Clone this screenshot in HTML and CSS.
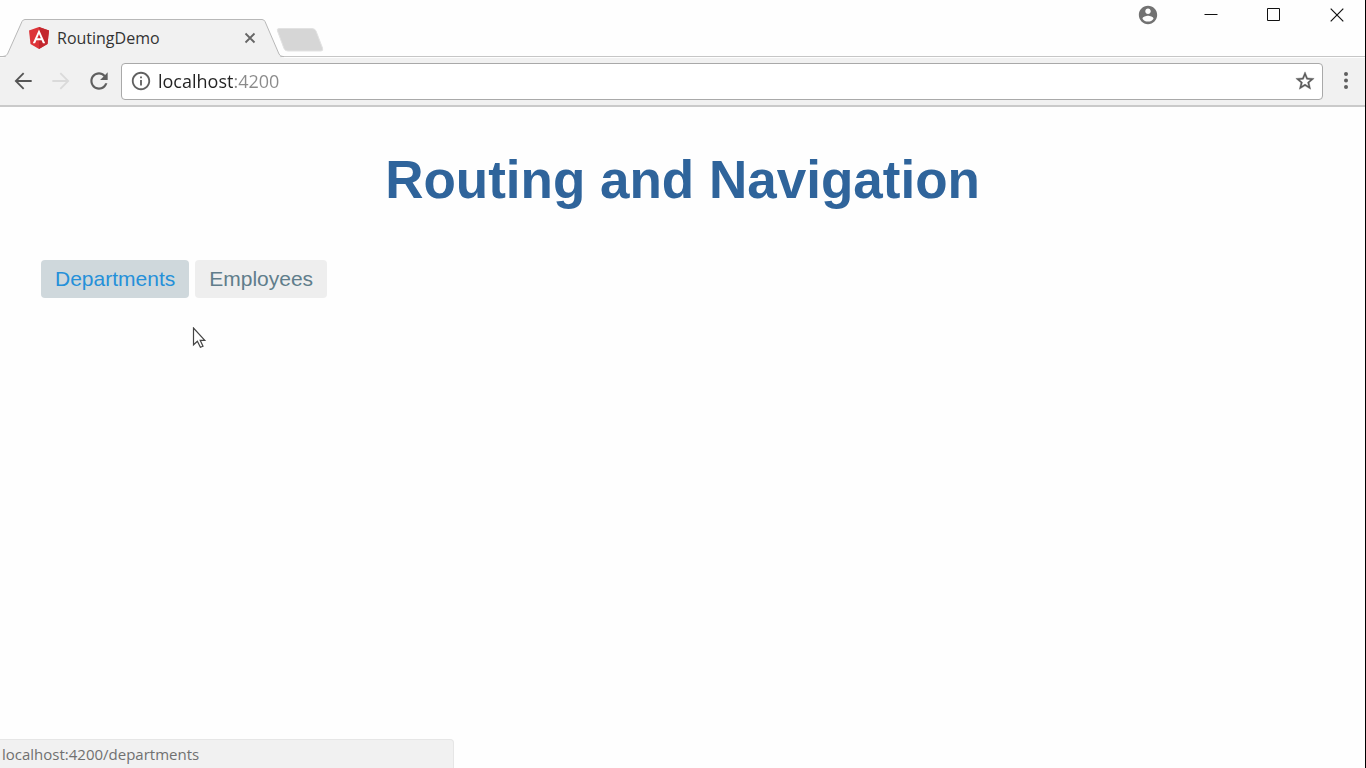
FILE: index.html
```html
<!DOCTYPE html>
<html lang="en">
<head>
<meta charset="utf-8">
<meta name="viewport" content="width=device-width, initial-scale=1">
<title>RoutingDemo</title>
<link rel="stylesheet" href="styles.css">
</head>
<body>
<div class="browser">
  <header class="titlebar">
    <div class="tab">
      <svg class="tab-shape" width="284" height="39" viewBox="0 0 284 39" aria-hidden="true">
        <path d="M0 38.500H3Q6 38.500 7.500 35L22 2.500Q23 .5 25 .5H262Q264 .5 265 2.500L279 35Q280 38.500 283 38.500H284V39H0Z" fill="#f1f1f1"/>
        <path d="M0 37.500H3Q6 37.500 7.500 35L22 2.500Q23 .5 25 .5H262Q264 .5 265 2.500L279 35Q280 37.500 283 37.500H284" fill="none" stroke="#b8b8b8"/>
      </svg>
      <svg class="favicon" width="22" height="22" viewBox="0 0 22 22" aria-hidden="true">
        <path d="M11 0 21 3.500 19.500 17 11 22 2.500 17 1 3.500Z" fill="#dd3338"/>
        <path d="M11 0 21 3.500 19.500 17 11 22Z" fill="#c3272e"/>
        <path d="M11 2.500 4.800 16.300H7.100L8.400 13.200H13.600L14.900 16.300H17.200ZM11 6.900 12.800 11.200H9.200Z" fill="#fff" fill-rule="evenodd"/>
      </svg>
      <span class="tab-title">RoutingDemo</span>
      <button class="tab-close" aria-label="Close tab">
        <svg width="12" height="12" viewBox="0 0 12 12"><path d="M1.500 1.500 10.500 10.500M10.500 1.500 1.500 10.500" stroke="#666" stroke-width="1.800"/></svg>
      </button>
    </div>
    <button class="new-tab" aria-label="New tab">
      <svg width="48" height="24" viewBox="0 0 48 24"><path d="M3 .5H36Q39 .5 40 3L46.500 20Q47.500 23 45 23H12Q9 23 8 20.500L1.500 3Q.5.5 3 .5Z" fill="#d6d6d6" stroke="#e2e2e2"/></svg>
    </button>
    <div class="window-controls">
      <button class="window-button" aria-label="Profile">
        <svg width="22" height="22" viewBox="0 0 24 24"><path fill="#727272" d="M12 2C6.480 2 2 6.480 2 12s4.480 10 10 10 10-4.480 10-10S17.520 2 12 2zm0 3c1.660 0 3 1.340 3 3s-1.340 3-3 3-3-1.340-3-3 1.340-3 3-3zm0 14.200c-2.500 0-4.710-1.280-6-3.220.03-1.990 4-3.080 6-3.080 1.990 0 5.970 1.090 6 3.080-1.290 1.940-3.500 3.220-6 3.220z"/></svg>
      </button>
      <button class="window-button" aria-label="Minimize">
        <svg width="14" height="14" viewBox="0 0 14 14"><path d="M.5 6.500H13.500" stroke="#111"/></svg>
      </button>
      <button class="window-button" aria-label="Maximize">
        <svg width="14" height="14" viewBox="0 0 14 14"><path d="M.5 .5H12.500V12.500H.5Z" fill="none" stroke="#111"/></svg>
      </button>
      <button class="window-button" aria-label="Close window">
        <svg width="14" height="14" viewBox="0 0 14 14"><path d="M.7 .7 13.300 13.300M13.300 .7 .7 13.300" stroke="#111" stroke-width="1.200"/></svg>
      </button>
    </div>
  </header>

  <div class="toolbar">
    <button class="nav-button" aria-label="Back">
      <svg width="26" height="26" viewBox="0 0 24 24"><path fill="#555" d="M20 11.100H7.500l5.700-5.700L12 4.200 4.200 12l7.800 7.800 1.200-1.200-5.700-5.700H20z"/></svg>
    </button>
    <button class="nav-button" aria-label="Forward" disabled>
      <svg width="26" height="26" viewBox="0 0 24 24"><path fill="#dadada" d="M4 11.100h12.500l-5.700-5.700L12 4.200l7.800 7.800-7.800 7.800-1.200-1.200 5.700-5.700H4z"/></svg>
    </button>
    <button class="nav-button" aria-label="Reload">
      <svg width="26" height="26" viewBox="0 0 24 24"><path fill="#5f5f5f" d="M17.650 6.350C16.200 4.900 14.210 4 12 4c-4.420 0-7.990 3.580-7.990 8s3.570 8 7.990 8c3.730 0 6.840-2.550 7.730-6h-2.080c-.82 2.330-3.040 4-5.650 4-3.310 0-6-2.690-6-6s2.690-6 6-6c1.660 0 3.140.69 4.220 1.780L13 11h7V4l-2.350 2.350z"/></svg>
    </button>
    <div class="omnibox">
      <svg width="22" height="22" viewBox="0 0 24 24" aria-hidden="true"><path fill="#616161" d="M11 17h2v-6h-2v6zm1-15C6.480 2 2 6.480 2 12s4.480 10 10 10 10-4.480 10-10S17.520 2 12 2zm0 18c-4.410 0-8-3.590-8-8s3.590-8 8-8 8 3.590 8 8-3.590 8-8 8zM11 9h2V7h-2v2z"/></svg>
      <input class="address" type="text" value="localhost:4200" aria-label="Address" spellcheck="false">
      <button class="bookmark" aria-label="Bookmark this page">
        <svg width="22" height="22" viewBox="0 0 24 24"><path fill="#5a5a5a" stroke="#5a5a5a" stroke-width=".4" d="M22 9.240l-7.190-.62L12 2 9.190 8.630 2 9.240l5.460 4.730L5.820 21 12 17.270 18.180 21l-1.630-7.030L22 9.240zM12 15.400l-3.760 2.270 1-4.280-3.320-2.880 4.380-.38L12 6.100l1.710 4.040 4.380.38-3.320 2.880 1 4.280L12 15.400z"/></svg>
      </button>
    </div>
    <button class="menu" aria-label="Menu">
      <svg width="6" height="20" viewBox="0 0 6 20"><g fill="#5f5f5f"><circle cx="3" cy="3" r="2"/><circle cx="3" cy="9.500" r="2"/><circle cx="3" cy="16" r="2"/></g></svg>
    </button>
  </div>

  <main class="page">
    <h1 class="page-title">Routing and Navigation</h1>
    <nav class="links">
      <a class="link link-active" href="#departments">Departments</a>
      <a class="link" href="#employees">Employees</a>
    </nav>
  </main>

  <svg class="cursor" width="15" height="23" viewBox="0 0 15 23" aria-hidden="true"><path d="M1.500 1V17.800L5.400 14.200 8.400 20.300 11 19.200 8.200 13.300H12.800Z" fill="#fff" stroke="#444" stroke-width="1.200"/></svg>
  <div class="status">localhost:4200/departments</div>
</div>
</body>
</html>
```
FILE: styles.css
```css
* {
  box-sizing: border-box;
}

body {
  margin: 0;
  background: #fefefe;
  font-family: "Open Sans", "Noto Sans", sans-serif;
}

button {
  display: flex;
  align-items: center;
  justify-content: center;
  padding: 0;
  border: 0;
  background: none;
}

svg {
  display: block;
  flex: none;
}

.browser {
  position: relative;
  display: flex;
  flex-direction: column;
  min-height: 100vh;
  border-right: 1px solid #000;
}

.titlebar {
  display: flex;
  align-items: flex-end;
  height: 58px;
  background: linear-gradient(#c6c6c6, #c6c6c6) 0 100% / 100% 1px no-repeat #fefefe;
  background-position: 0 56px;
}

.tab {
  position: relative;
  display: flex;
  align-items: center;
  width: 284px;
  height: 39px;
  padding: 0 26px 2px 28px;
}

.tab-shape {
  position: absolute;
  inset: 0;
}

.favicon,
.tab-title,
.tab-close {
  position: relative;
}

.tab-title {
  flex: 1;
  margin-left: 7px;
  color: #333;
  font-size: 16px;
  line-height: 22px;
}

.tab-close {
  width: 16px;
  height: 16px;
}

.new-tab {
  align-self: flex-end;
  margin: 0 0 6px -8px;
}

.window-controls {
  display: flex;
  align-self: flex-start;
  gap: 23px;
  margin-left: auto;
  padding-right: 8px;
}

.window-button {
  width: 40px;
  height: 30px;
}

.toolbar {
  display: flex;
  align-items: center;
  gap: 12px;
  height: 49px;
  padding: 0 16px 1px 10px;
  border-bottom: 2px solid #cacaca;
  background: #f1f1f1;
}

.nav-button {
  width: 26px;
  height: 26px;
}

.omnibox {
  display: flex;
  flex: 1;
  align-items: center;
  gap: 6px;
  height: 37px;
  margin: 0 8px 0 -3px;
  padding: 0 6px 0 8px;
  border: 1px solid #a9a9a9;
  border-radius: 4px;
  background: #fff;
}

.address {
  flex: 1;
  min-width: 0;
  padding: 0;
  border: 0;
  outline: 0;
  color: #222;
  font: 18px/28px "Open Sans", "Noto Sans", sans-serif;
  background: linear-gradient(90deg, #222 76px, #8a8a8a 76px);
  -webkit-background-clip: text;
  background-clip: text;
  -webkit-text-fill-color: transparent;
}

.page {
  flex: 1;
  padding: 41px 41px 0;
  font-family: "Liberation Sans", Arial, sans-serif;
}

.page-title {
  margin: 0;
  color: #2f649b;
  font-size: 53px;
  font-weight: bold;
  line-height: 64px;
  text-align: center;
}

.links {
  display: flex;
  gap: 6px;
  margin-top: 48px;
}

.link {
  padding: 6px 14px;
  border-radius: 4px;
  background: #eee;
  color: #607d8b;
  font-size: 21px;
  line-height: 26px;
  text-decoration: none;
}

.link-active {
  background: #cfd8dc;
  color: #2590d9;
}

.cursor {
  position: absolute;
  top: 327px;
  left: 192px;
}

.status {
  position: absolute;
  bottom: 0;
  left: 0;
  width: 454px;
  max-width: 100%;
  height: 29px;
  padding: 3px 2px;
  border: 1px solid #e6e6e6;
  border-width: 1px 1px 0 0;
  border-radius: 0 4px 0 0;
  background: #f1f1f1;
  color: #707070;
  font-size: 15px;
  line-height: 22px;
}
```
